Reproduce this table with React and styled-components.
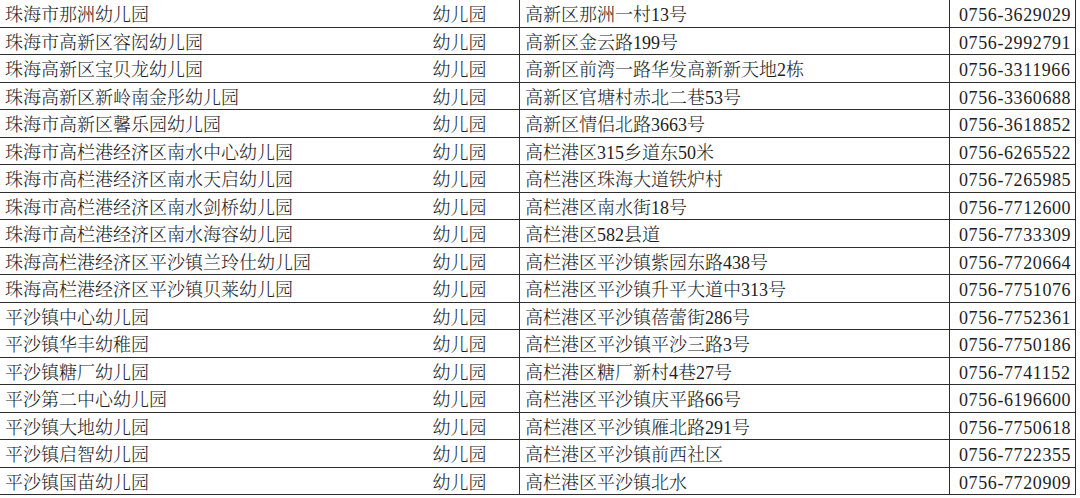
import React from "react";
import styled, { createGlobalStyle } from "styled-components";

const Global = createGlobalStyle`
  html, body { margin: 0; padding: 0; background: #fff; }
  body { width: 1080px; height: 498px; overflow: hidden; }
`;

const rows = [
  ["珠海市那洲幼儿园", "幼儿园", "高新区那洲一村13号", "0756-3629029"],
  ["珠海市高新区容闳幼儿园", "幼儿园", "高新区金云路199号", "0756-2992791"],
  ["珠海高新区宝贝龙幼儿园", "幼儿园", "高新区前湾一路华发高新新天地2栋", "0756-3311966"],
  ["珠海高新区新岭南金彤幼儿园", "幼儿园", "高新区官塘村赤北二巷53号", "0756-3360688"],
  ["珠海市高新区馨乐园幼儿园", "幼儿园", "高新区情侣北路3663号", "0756-3618852"],
  ["珠海市高栏港经济区南水中心幼儿园", "幼儿园", "高栏港区315乡道东50米", "0756-6265522"],
  ["珠海市高栏港经济区南水天启幼儿园", "幼儿园", "高栏港区珠海大道铁炉村", "0756-7265985"],
  ["珠海市高栏港经济区南水剑桥幼儿园", "幼儿园", "高栏港区南水街18号", "0756-7712600"],
  ["珠海市高栏港经济区南水海容幼儿园", "幼儿园", "高栏港区582县道", "0756-7733309"],
  ["珠海高栏港经济区平沙镇兰玲仕幼儿园", "幼儿园", "高栏港区平沙镇紫园东路438号", "0756-7720664"],
  ["珠海高栏港经济区平沙镇贝莱幼儿园", "幼儿园", "高栏港区平沙镇升平大道中313号", "0756-7751076"],
  ["平沙镇中心幼儿园", "幼儿园", "高栏港区平沙镇蓓蕾街286号", "0756-7752361"],
  ["平沙镇华丰幼稚园", "幼儿园", "高栏港区平沙镇平沙三路3号", "0756-7750186"],
  ["平沙镇糖厂幼儿园", "幼儿园", "高栏港区糖厂新村4巷27号", "0756-7741152"],
  ["平沙第二中心幼儿园", "幼儿园", "高栏港区平沙镇庆平路66号", "0756-6196600"],
  ["平沙镇大地幼儿园", "幼儿园", "高栏港区平沙镇雁北路291号", "0756-7750618"],
  ["平沙镇启智幼儿园", "幼儿园", "高栏港区平沙镇前西社区", "0756-7722355"],
  ["平沙镇国苗幼儿园", "幼儿园", "高栏港区平沙镇北水", "0756-7720909"],
];

const Table = styled.div`
  width: 1076px;
  font-family: "Liberation Serif", "Noto Serif CJK SC", "Noto Sans CJK SC", serif;
  font-size: 18px;
  font-weight: 300;
  color: #1e1e1e;
`;

const Row = styled.div`
  display: grid;
  grid-template-columns: 400px 120px 430px 126px;
  height: 27.5px;
  box-sizing: border-box;
  border-bottom: 1px solid #2e2e2e;
`;

const Cell = styled.div`
  display: flex;
  align-items: center;
  justify-content: ${(p) => (p.$center ? "center" : "flex-start")};
  padding-left: ${(p) => (p.$center ? "0" : "5px")};
  border-right: ${(p) => (p.$line ? "1px solid #2e2e2e" : "none")};
  white-space: nowrap;
  overflow: hidden;
  line-height: 1;
  padding-top: 4px;
`;

const Phone = styled(Cell)`
  padding-left: 9px;
  letter-spacing: 0.6px;
`;

export default function App() {
  return (
    <>
      <Global />
      <Table>
        {rows.map((r, i) => (
          <Row key={i}>
            <Cell>{r[0]}</Cell>
            <Cell $center $line>
              {r[1]}
            </Cell>
            <Cell $line>{r[2]}</Cell>
            <Phone $line>{r[3]}</Phone>
          </Row>
        ))}
      </Table>
    </>
  );
}
